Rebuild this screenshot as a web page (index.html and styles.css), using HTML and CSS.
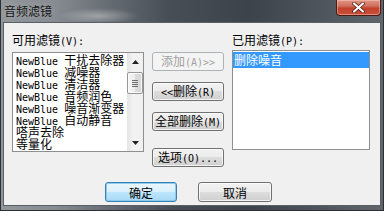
FILE: index.html
```html
<!DOCTYPE html>
<html>
<head>
<meta charset="utf-8">
<link rel="stylesheet" href="styles.css">
</head>
<body>
<div class="window">
  <div class="titlebar">
    <span class="title">音频滤镜</span>
    <div class="close">
      <svg width="13" height="11" viewBox="0 0 13 11">
        <path d="M2 1.5 L11 9.5 M11 1.5 L2 9.5" stroke="#4a1510" stroke-width="3.6" stroke-linecap="round"/>
        <path d="M2 1.5 L11 9.5 M11 1.5 L2 9.5" stroke="#ffffff" stroke-width="2.2" stroke-linecap="round"/>
      </svg>
    </div>
  </div>
  <div class="client">
    <div class="main">
      <div class="col left">
        <div class="label">可用滤镜<span class="a">(V):</span></div>
        <div class="listbox lb-left">
          <div class="items">
            <div class="item"><span class="en">NewBlue </span>干扰去除器</div>
            <div class="item"><span class="en">NewBlue </span>减噪器</div>
            <div class="item"><span class="en">NewBlue </span>清洁器</div>
            <div class="item"><span class="en">NewBlue </span>音频润色</div>
            <div class="item"><span class="en">NewBlue </span>噪音渐变器</div>
            <div class="item"><span class="en">NewBlue </span>自动静音</div>
            <div class="item">嗒声去除</div>
            <div class="item">等量化</div>
          </div>
          <div class="scrollbar">
            <div class="sb-btn">
              <svg width="7" height="4" viewBox="0 0 7 4"><path d="M0 4 L3.5 0 L7 4 Z" fill="#222"/></svg>
            </div>
            <div class="track">
              <div class="thumb"><div class="grip"></div></div>
            </div>
            <div class="sb-btn">
              <svg width="7" height="4" viewBox="0 0 7 4"><path d="M0 0 L7 0 L3.5 4 Z" fill="#222"/></svg>
            </div>
          </div>
        </div>
      </div>
      <div class="col mid">
        <button class="btn disabled">添加<span class="a">(A)&gt;&gt;</span></button>
        <button class="btn"><span class="a">&lt;&lt;</span>删除<span class="a">(R)</span></button>
        <button class="btn">全部删除<span class="a">(M)</span></button>
        <button class="btn opt">选项<span class="a">(O)...</span></button>
      </div>
      <div class="col right">
        <div class="label">已用滤镜<span class="a">(P):</span></div>
        <div class="listbox lb-right">
          <div class="sel">删除噪音</div>
        </div>
      </div>
    </div>
    <div class="footer">
      <button class="btn big default">确定</button>
      <button class="btn big cancel">取消</button>
    </div>
  </div>
</div>
</body>
</html>
```

FILE: styles.css
```css
* { box-sizing: border-box; }
html, body { margin: 0; padding: 0; }
body {
  width: 384px;
  height: 211px;
  overflow: hidden;
  font-family: "Noto Sans CJK SC", "Liberation Sans", sans-serif;
  font-size: 12px;
  color: #000;
}
.window {
  width: 384px;
  height: 211px;
  display: flex;
  flex-direction: column;
  padding: 0 2px 4px 2px;
  border: 1px solid #2c3035;
  border-top: none;
  background:
    radial-gradient(ellipse 40px 8px at 98px 16px, rgba(255,255,255,0.35), rgba(255,255,255,0) 100%),
    linear-gradient(90deg, #92979c 0%, #868c91 14%, #666c73 28%, #474e56 44%, #3c434a 65%, #4f555c 84%, #60666c 100%);
}
.titlebar {
  height: 22px;
  display: flex;
  align-items: flex-start;
  justify-content: space-between;
  flex-shrink: 0;
}
.title {
  margin-left: 1px;
  padding-top: 4px;
  line-height: 14px;
  font-size: 12px;
  color: #141414;
  text-shadow: 0 0 4px rgba(255,255,255,0.35);
}
.close {
  width: 45px;
  height: 16px;
  border: 1px solid #4a1a14;
  border-top: none;
  border-radius: 0 0 4px 4px;
  background: linear-gradient(#e19585 0%, #d0705e 40%, #c0412c 55%, #c9503a 100%);
  box-shadow: inset 0 0 0 1px rgba(255,210,200,0.45);
  display: flex;
  align-items: center;
  justify-content: center;
}
.close svg { display: block; }
.client {
  flex: 1;
  background: #f0f0f0;
  border: 1px solid #5a5f66;
  padding: 10px 0 0 8px;
  display: flex;
  flex-direction: column;
}
.main {
  display: flex;
  gap: 8px;
  align-items: flex-start;
}
.col { display: flex; flex-direction: column; }
.left { width: 132px; }
.right { width: 138px; }
.mid { width: 72px; padding-top: 19px; }
.label {
  line-height: 14px;
  height: 14px;
  white-space: pre;
}
.a, .en {
  font-family: "DejaVu Sans Mono", "Liberation Mono", monospace;
  font-size: 10px;
}
.listbox {
  background: #fff;
  border: 1px solid #8e8f91;
  height: 100px;
}
.lb-left {
  margin-top: 5px;
  display: flex;
}
.lb-right {
  margin-top: 3px;
  padding: 1px 0;
}
.items {
  flex: 1;
  padding: 1px 0 0 3px;
  overflow: hidden;
}
.item {
  line-height: 12px;
  height: 12px;
  white-space: pre;
}
.scrollbar {
  width: 16px;
  display: flex;
  flex-direction: column;
  background: linear-gradient(90deg, #e4e4e4, #f3f3f3 40%, #f0f0f0);
}
.sb-btn {
  height: 17px;
  display: flex;
  align-items: center;
  justify-content: center;
  flex-shrink: 0;
}
.sb-btn svg { display: block; }
.track { flex: 1; padding-top: 2px; }
.thumb {
  height: 22px;
  border: 1px solid #979797;
  border-radius: 2px;
  background: linear-gradient(90deg, #f6f6f6 0%, #ececec 50%, #dcdcdc 50%, #d6d6d6 100%);
  box-shadow: inset 0 0 0 1px rgba(255,255,255,0.8);
  display: flex;
  align-items: center;
  justify-content: center;
}
.grip {
  width: 6px;
  height: 7px;
  background: repeating-linear-gradient(#6d6d6d 0 1px, transparent 1px 2px);
}
.btn {
  display: block;
  height: 19px;
  width: 72px;
  padding: 0;
  margin: 0 0 11px 0;
  border: 1px solid #707070;
  border-radius: 3px;
  background: linear-gradient(#f2f2f2 0%, #ebebeb 50%, #dddddd 50%, #cfcfcf 100%);
  box-shadow: inset 0 0 0 1px rgba(255,255,255,0.75);
  font-family: "Noto Sans CJK SC", "Liberation Sans", sans-serif;
  font-size: 12px;
  line-height: 16px;
  color: #000;
  text-align: center;
  white-space: pre;
}
.btn.disabled {
  border-color: #adb2b5;
  background: #f4f4f4;
  color: #a0a0a0;
  box-shadow: none;
}
.btn.opt { margin-top: 6px; margin-bottom: 0; }
.sel {
  height: 16px;
  line-height: 16px;
  padding-left: 1px;
  background: #3399ff;
  color: #fff;
}
.footer {
  display: flex;
  gap: 21px;
  margin-top: 15px;
  padding-left: 93px;
}
.btn.big {
  height: 20px;
  line-height: 17px;
  margin: 0;
}
.btn.cancel { width: 74px; }
.btn.default {
  border-color: #3c7fb1;
  background: linear-gradient(#eaf6fd 0%, #d9f0fc 50%, #bee6fd 50%, #a7d9f5 100%);
  box-shadow: inset 0 0 0 1px rgba(130,200,240,0.9);
}
```
